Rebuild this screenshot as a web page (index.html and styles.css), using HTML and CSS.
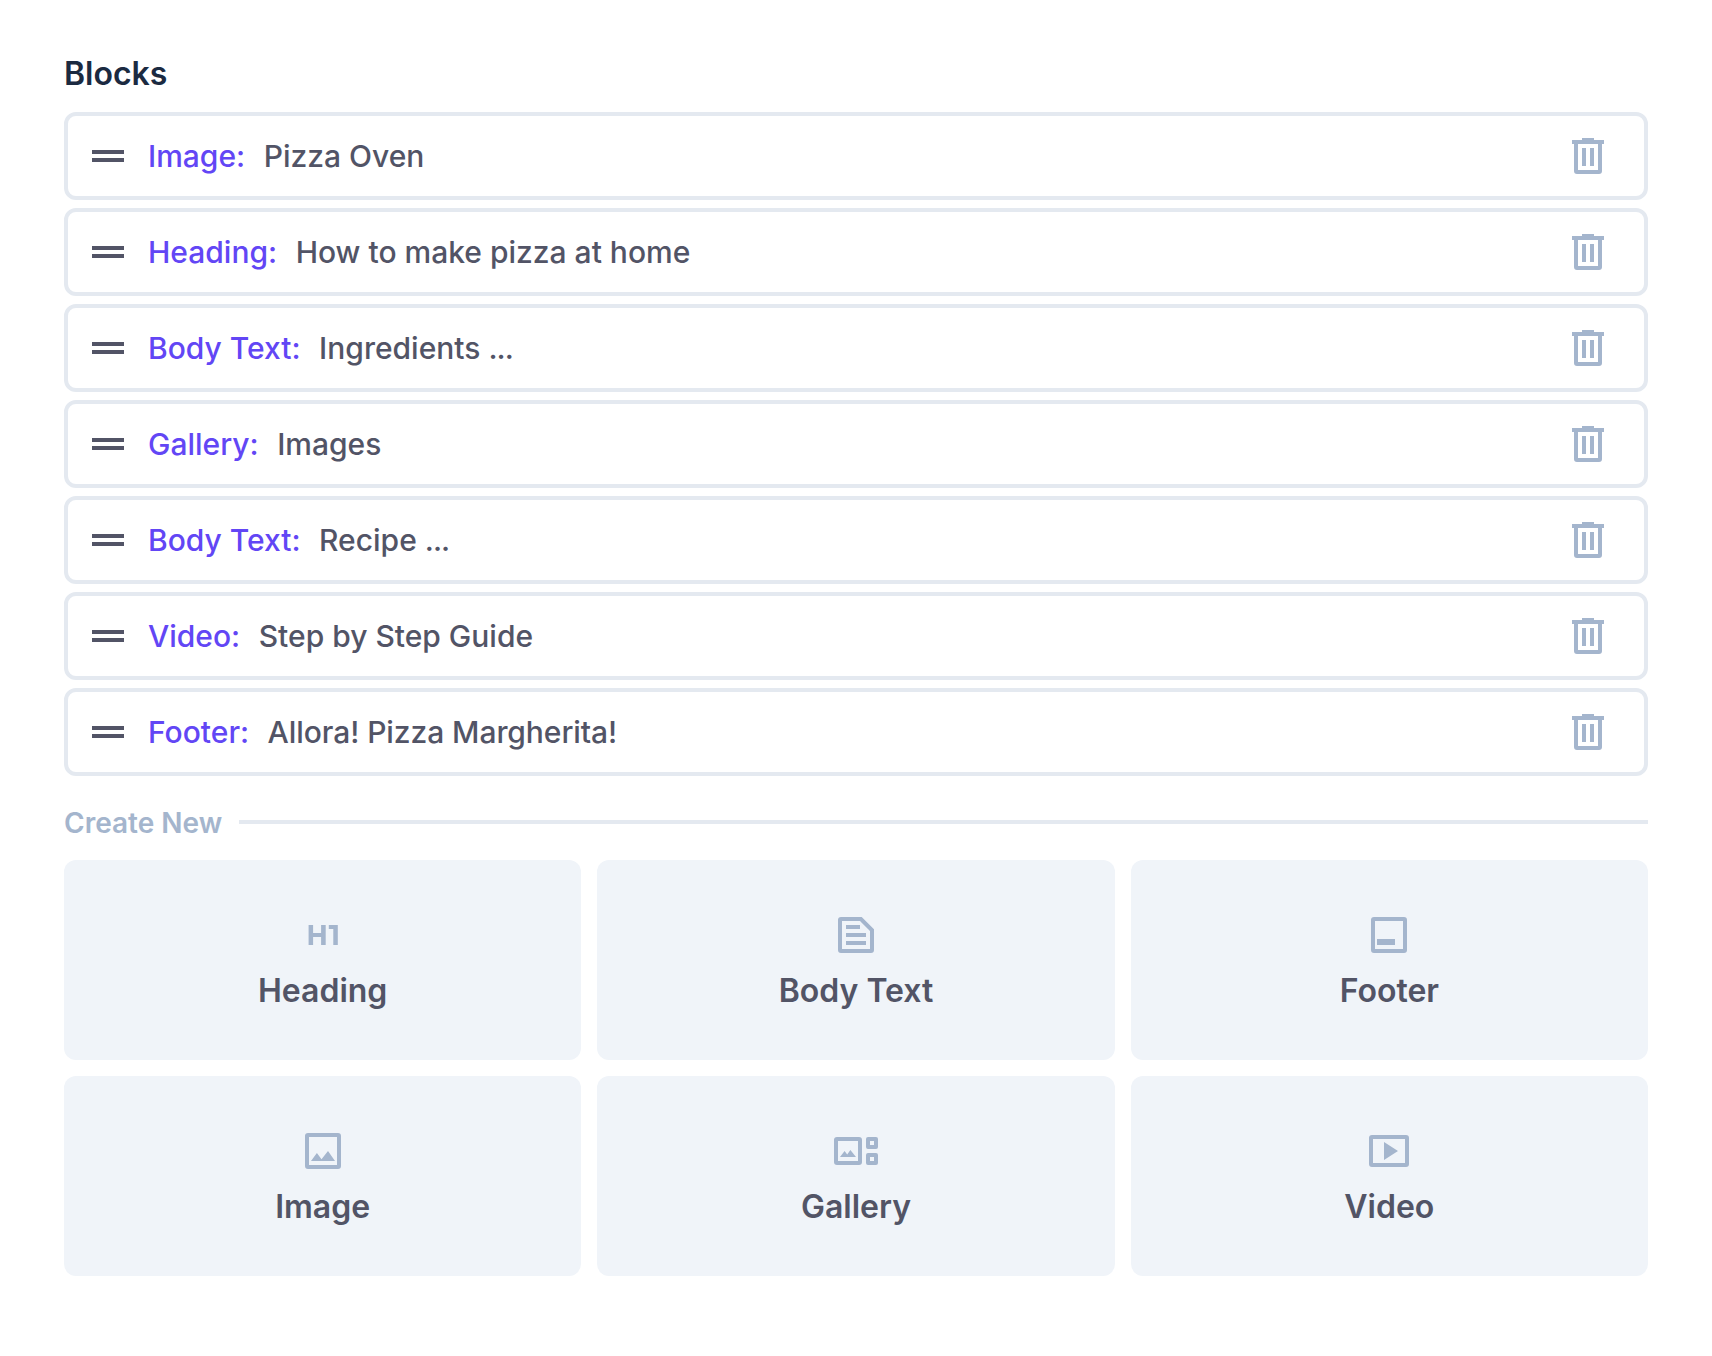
FILE: index.html
```html
<!DOCTYPE html>
<html lang="en">
<head>
<meta charset="utf-8">
<title>Blocks</title>
<link rel="stylesheet" href="styles.css">
</head>
<body>
<svg class="sprite" aria-hidden="true">
  <symbol id="handle" viewBox="0 0 48 48"><path d="M8 18h32v4H8zM8 26h32v4H8z"/></symbol>
  <symbol id="trash" viewBox="0 0 48 48"><path fill-rule="evenodd" d="M8 8h10V6h12v2h10v4h-2v27a3 3 0 0 1-3 3H13a3 3 0 0 1-3-3V12H8zM14 12v26h20V12zM18 16h4v18h-4zM26 16h4v18h-4z"/></symbol>
  <symbol id="h1" viewBox="0 0 48 48"><path d="M9.6 14h4.5v8h8v-8h4.6v20h-4.6v-8h-8v8H9.6zM29.8 14h9v20h-4.5V18h-4.5z"/></symbol>
  <symbol id="text" viewBox="0 0 48 48"><path fill-rule="evenodd" d="M9 6h20.7L42 18.3V39a3 3 0 0 1-3 3H9a3 3 0 0 1-3-3V9a3 3 0 0 1 3-3zM10 10v28h28V20L28 10zM14 14h14v4H14zM14 22h20v4H14zM14 30h20v4H14z"/></symbol>
  <symbol id="footer" viewBox="0 0 48 48"><path fill-rule="evenodd" d="M9 6h30a3 3 0 0 1 3 3v30a3 3 0 0 1-3 3H9a3 3 0 0 1-3-3V9a3 3 0 0 1 3-3zM10 10v28h28V10zM12 28h18v6H12z"/></symbol>
  <symbol id="image" viewBox="0 0 48 48"><path fill-rule="evenodd" d="M9 6h30a3 3 0 0 1 3 3v30a3 3 0 0 1-3 3H9a3 3 0 0 1-3-3V9a3 3 0 0 1 3-3zM10 10v28h28V10zM12 34l5.9-7.9 4.6 6.1L29 23.9 36 34z"/></symbol>
  <symbol id="gallery" viewBox="0 0 48 48"><path fill-rule="evenodd" d="M5 10h22a3 3 0 0 1 3 3v22a3 3 0 0 1-3 3H5a3 3 0 0 1-3-3V13a3 3 0 0 1 3-3zM6 14v20h20V14zM8 30l4.6-6 2.6 3.4 3.2-4.4L24 30zM36 10h8a2 2 0 0 1 2 2v8a2 2 0 0 1-2 2h-8a2 2 0 0 1-2-2v-8a2 2 0 0 1 2-2zM38 14v4h4v-4zM36 26h8a2 2 0 0 1 2 2v8a2 2 0 0 1-2 2h-8a2 2 0 0 1-2-2v-8a2 2 0 0 1 2-2zM38 30v4h4v-4z"/></symbol>
  <symbol id="video" viewBox="0 0 48 48"><path fill-rule="evenodd" d="M7 8h34a3 3 0 0 1 3 3v26a3 3 0 0 1-3 3H7a3 3 0 0 1-3-3V11a3 3 0 0 1 3-3zM8 12v24h32V12zM19 15l14 9-14 9z"/></symbol>
</svg>
<main class="editor">
  <h1 class="title">Blocks</h1>
  <ul class="blocks">
    <li class="block"><svg class="icon handle"><use href="#handle"/></svg><span class="type">Image:</span><span class="name">Pizza Oven</span><svg class="icon trash"><use href="#trash"/></svg></li>
    <li class="block"><svg class="icon handle"><use href="#handle"/></svg><span class="type">Heading:</span><span class="name">How to make pizza at home</span><svg class="icon trash"><use href="#trash"/></svg></li>
    <li class="block"><svg class="icon handle"><use href="#handle"/></svg><span class="type">Body Text:</span><span class="name">Ingredients <span class="dots">...</span></span><svg class="icon trash"><use href="#trash"/></svg></li>
    <li class="block"><svg class="icon handle"><use href="#handle"/></svg><span class="type">Gallery:</span><span class="name">Images</span><svg class="icon trash"><use href="#trash"/></svg></li>
    <li class="block"><svg class="icon handle"><use href="#handle"/></svg><span class="type">Body Text:</span><span class="name">Recipe <span class="dots">...</span></span><svg class="icon trash"><use href="#trash"/></svg></li>
    <li class="block"><svg class="icon handle"><use href="#handle"/></svg><span class="type">Video:</span><span class="name">Step by Step Guide</span><svg class="icon trash"><use href="#trash"/></svg></li>
    <li class="block"><svg class="icon handle"><use href="#handle"/></svg><span class="type">Footer:</span><span class="name tight">Allora! Pizza Margherita!</span><svg class="icon trash"><use href="#trash"/></svg></li>
  </ul>
  <h2 class="divider"><span>Create New</span></h2>
  <div class="cards">
    <div class="card"><svg class="icon"><use href="#h1"/></svg><span>Heading</span></div>
    <div class="card"><svg class="icon"><use href="#text"/></svg><span>Body Text</span></div>
    <div class="card"><svg class="icon"><use href="#footer"/></svg><span>Footer</span></div>
    <div class="card"><svg class="icon"><use href="#image"/></svg><span>Image</span></div>
    <div class="card"><svg class="icon"><use href="#gallery"/></svg><span>Gallery</span></div>
    <div class="card"><svg class="icon"><use href="#video"/></svg><span>Video</span></div>
  </div>
</main>
</body>
</html>
```
FILE: styles.css
```css
* { box-sizing: border-box; }
body { margin: 0; background: #fff; color: #525466; font-family: Inter, "Liberation Sans", sans-serif; }
.sprite { display: none; }
.editor { padding: 54px 64px 80px; }
.title { margin: 0 0 18px; font-size: 32px; line-height: 40px; font-weight: 600; color: #1b2a41; }
.blocks { margin: 0; padding: 0; list-style: none; display: flex; flex-direction: column; gap: 8px; }
.block { display: flex; align-items: center; height: 88px; padding: 0 32px 0 16px; border: 4px solid #e4e9f0; border-radius: 12px; font-size: 30px; line-height: 40px; font-weight: 500; }
.icon { width: 48px; height: 48px; flex: none; display: block; fill: #a4b5cd; }
.handle { margin-right: 16px; fill: #525466; }
.trash { margin-left: auto; }
.type { color: #6246f5; margin-right: 18.5px; }
.dots { letter-spacing: -1px; }
.tight { letter-spacing: -0.07px; }
.divider { display: flex; align-items: center; gap: 17px; margin: 26px 0 18px; font-size: 28px; line-height: 40px; font-weight: 600; color: #a4b5cd; height: 40px; }
.divider span { padding-top: 2px; }
.divider::after { content: ""; flex: 1; height: 4px; background: #e4e9f0; }
.cards { display: grid; grid-template-columns: repeat(3, 1fr); gap: 16px; }
.card { height: 200px; padding-top: 51px; border-radius: 12px; background: #f0f4f9; display: flex; flex-direction: column; align-items: center; gap: 12px; font-size: 32px; line-height: 40px; font-weight: 600; }
```
